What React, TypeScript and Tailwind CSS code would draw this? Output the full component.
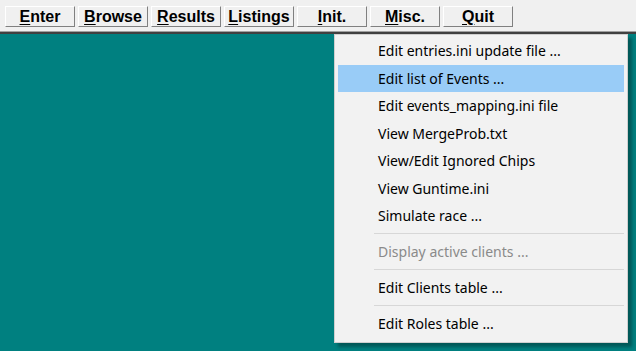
import React from "react";

const menuBar = [
  { key: "E", rest: "nter" },
  { key: "B", rest: "rowse" },
  { key: "R", rest: "esults" },
  { key: "L", rest: "istings" },
  { key: "I", rest: "nit." },
  { key: "M", rest: "isc." },
  { key: "Q", rest: "uit" },
];

type Entry = { label?: string; disabled?: boolean; active?: boolean; sep?: boolean };

const items: Entry[] = [
  { label: "Edit entries.ini update file ..." },
  { label: "Edit list of Events ...", active: true },
  { label: "Edit events_mapping.ini file" },
  { label: "View MergeProb.txt" },
  { label: "View/Edit Ignored Chips" },
  { label: "View Guntime.ini" },
  { label: "Simulate race ..." },
  { sep: true },
  { label: "Display active clients ...", disabled: true },
  { sep: true },
  { label: "Edit Clients table ..." },
  { sep: true },
  { label: "Edit Roles table ..." },
];

function MenuButton({ k, rest }: { k: string; rest: string }) {
  return (
    <div className="flex h-[21px] w-[70px] items-center justify-center border-t border-l border-t-white border-l-white border-b border-r border-b-[#808080] border-r-[#808080] bg-[#f0f0f0] text-[16px] font-bold leading-none text-black">
      <span>
        <span className="underline underline-offset-2">{k}</span>
        {rest}
      </span>
    </div>
  );
}

export default function App() {
  return (
    <div className="relative flex h-[351px] w-[636px] flex-col overflow-hidden font-['Liberation_Sans',Arial,sans-serif]">
      <div className="flex h-[32px] gap-[3px] border-b border-[#a0a0a0] bg-[#f0f0f0] pl-[5px] pt-[6px]">
        {menuBar.map((m) => (
          <MenuButton key={m.key} k={m.key} rest={m.rest} />
        ))}
      </div>
      <div className="h-[2px] bg-[#404040]" />
      <div className="flex-1 bg-[#008080]" />

      <div className="absolute left-[334px] top-[34px] flex w-[294px] flex-col border border-[#cfcfcf] bg-[#f2f2f2] px-[3px] pt-[2px] pb-[4px] font-['Noto_Sans',sans-serif] text-[14px] shadow-[4px_4px_3px_rgba(0,40,40,0.45)]">
        {items.map((it, i) =>
          it.sep ? (
            <div key={i} className="flex h-[8.5px] items-center pl-[36px]">
              <div className="h-px w-full bg-[#d7d7d7]" />
            </div>
          ) : (
            <div
              key={i}
              className={`flex h-[27.5px] items-center pl-[40px] ${it.active ? "bg-[#99ccf7]" : ""} ${it.disabled ? "text-[#8a8a8a]" : "text-black"}`}
            >
              {it.label}
            </div>
          )
        )}
      </div>
    </div>
  );
}
